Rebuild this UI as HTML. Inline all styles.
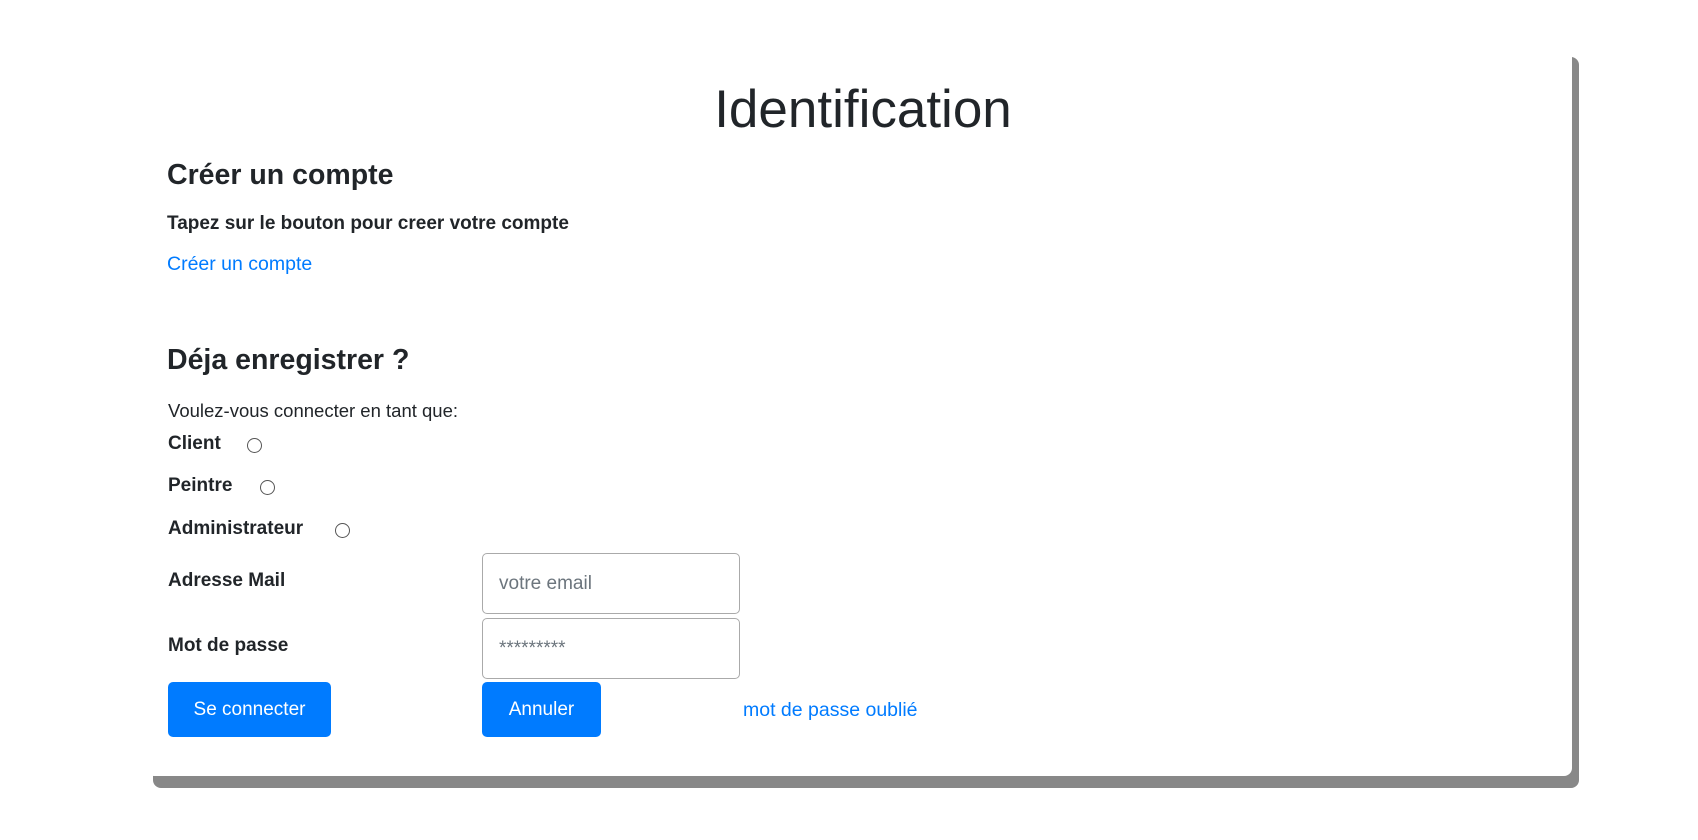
<!DOCTYPE html>
<html><head><meta charset="utf-8"><style>
body{margin:0;width:1698px;height:840px;background:#fff;font-family:"Liberation Sans",sans-serif;color:#212529;position:relative;overflow:hidden}
.card{position:absolute;left:146px;top:45px;width:1426px;height:731px;background:#fff;border-radius:8px;box-shadow:7px 12px 0 #888}
.in0{position:absolute;left:8px;top:11px}
.a{position:absolute;white-space:nowrap}
h1{position:absolute;left:0;width:1418px;text-align:center;top:23px;margin:0;font-weight:400;font-size:53px}
.h3{font-size:28.5px;font-weight:bold}
.b{font-weight:bold;font-size:19px}
.l{color:#007bff;font-size:19.5px}
.r{position:absolute;width:13px;height:13px;border:1px solid #555;border-radius:50%}
.in{position:absolute;left:328px;width:258px;height:61px;border:1px solid #aaa;border-radius:5px;box-sizing:border-box;color:#6c757d;font-size:19px;padding-left:16px;line-height:59px}
.btn{position:absolute;top:626px;height:55px;background:#007bff;color:#fff;border-radius:5px;font-size:19px;text-align:center;line-height:55px}
</style></head><body>
<div class="card"><div class="in0">
<h1>Identification</h1>
<div class="a h3" style="left:13px;top:103px">Créer un compte</div>
<div class="a b" style="left:13px;top:157px">Tapez sur le bouton pour creer votre compte</div>
<div class="a l" style="left:13px;top:197px">Créer un compte</div>
<div class="a h3" style="left:13px;top:288px">Déja enregistrer ?</div>
<div class="a" style="left:14px;top:344px;font-size:18.5px">Voulez-vous connecter en tant que:</div>
<div class="a b" style="left:14px;top:377px">Client</div><div class="r" style="left:93px;top:382px"></div>
<div class="a b" style="left:14px;top:419px">Peintre</div><div class="r" style="left:106px;top:424px"></div>
<div class="a b" style="left:14px;top:462px">Administrateur</div><div class="r" style="left:181px;top:467px"></div>
<div class="a b" style="left:14px;top:514px">Adresse Mail</div>
<div class="in" style="top:497px">votre email</div>
<div class="a b" style="left:14px;top:579px">Mot de passe</div>
<div class="in" style="top:562px">*********</div>
<div class="btn" style="left:14px;width:163px">Se connecter</div>
<div class="btn" style="left:328px;width:119px">Annuler</div>
<div class="a l" style="left:589px;top:643px;font-size:19.5px">mot de passe oublié</div>
</div></div>
</body></html>
